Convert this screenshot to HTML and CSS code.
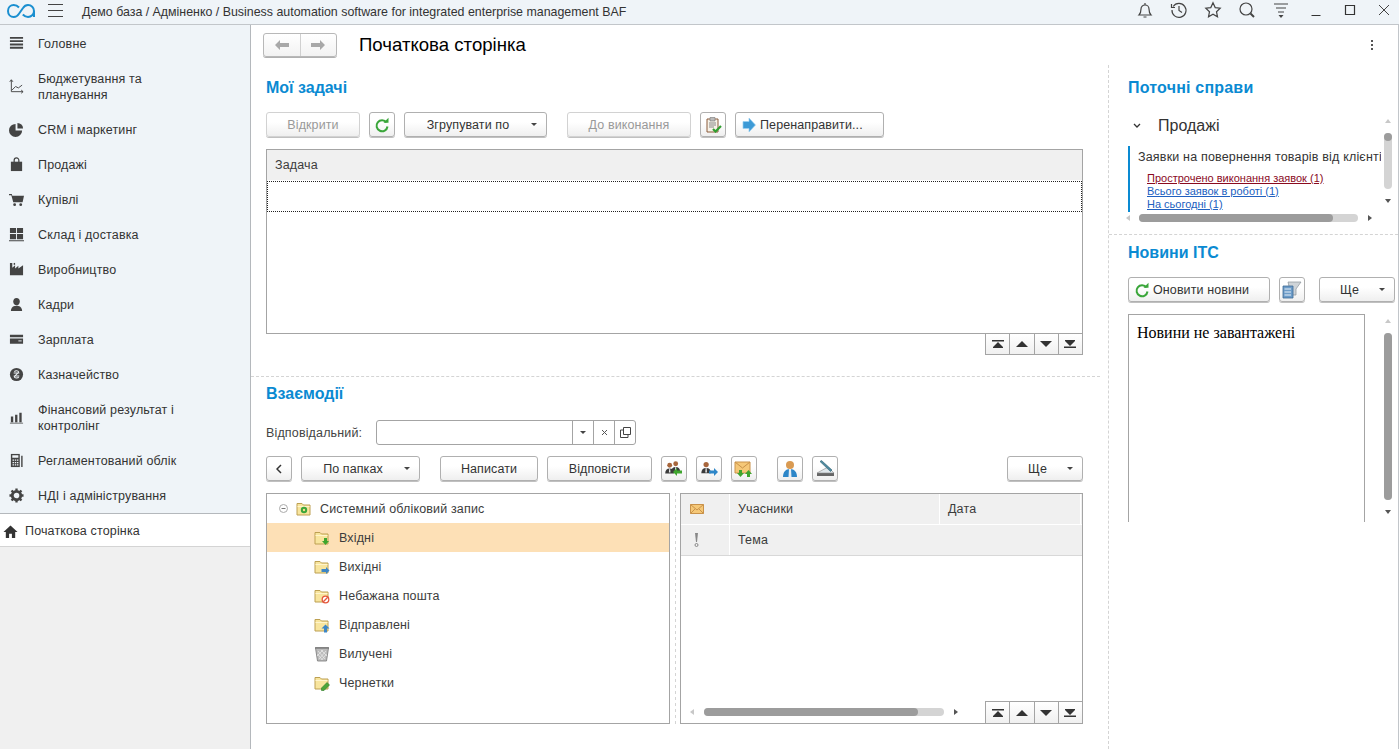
FILE: index.html
```html
<!DOCTYPE html>
<html lang="uk">
<head>
  <meta charset="UTF-8" />
  <meta name="viewport" content="width=device-width, initial-scale=1.0" />
  <title>Початкова сторінка</title>
  <link rel="stylesheet" href="styles.css">
</head>
<body>
  <svg class="sprite" xmlns="http://www.w3.org/2000/svg">
    <symbol id="i-folder" viewBox="0 0 16 16">
      <path d="M1 2.500h5L7.500 4h6.500v10H1z" fill="#f8e59e" stroke="#bda052"/>
      <path d="M1.500 5.500h12" stroke="#fff5cc"/>
    </symbol>
    <symbol id="i-refresh" viewBox="0 0 16 16">
      <path d="M12.500 5.500A5.500 5.500 0 1 0 13.500 9.500" fill="none" stroke="#3aa63a" stroke-width="2"/>
      <path d="M9.500 5.800h5v-5z" fill="#3aa63a"/>
    </symbol>
    <symbol id="i-top" viewBox="0 0 12 8"><path d="M0 0h12v1.500H0zM6 2l5 5H1z" fill="#333"/><path d="M1 7h10v1H1z" fill="#333"/></symbol>
    <symbol id="i-up" viewBox="0 0 12 8"><path d="M6 1l6 6H0z" fill="#333"/></symbol>
    <symbol id="i-down" viewBox="0 0 12 8"><path d="M0 1h12L6 7z" fill="#333"/></symbol>
    <symbol id="i-end" viewBox="0 0 12 8"><path d="M1 0h10v1H1zM6 6L1 1h10zM0 6.500h12V8H0z" fill="#333"/></symbol>
    <symbol id="i-man" viewBox="0 0 16 16">
      <circle cx="7" cy="4" r="3" fill="#a8663c"/>
      <path d="M1.500 14c0-4 2-6 5.500-6s5.500 2 5.500 6z" fill="#3b3b3b"/>
      <path d="M6.500 8h1l.5 5H6z" fill="#e8e8e8"/>
    </symbol>
  </svg>

  <div class="app">
    <header class="topbar">
      <svg class="logo" viewBox="0 0 28 14"><path d="M12 3.500C10.500 1.800 9 1 6.800 1 3.500 1 1 3.500 1 7s2.500 6 5.800 6c2.200 0 3.700-1 5-3L16 4c1.300-2 2.800-3 5-3 3.300 0 6 2.500 6 6v6M27 7c0 3.500-2.700 6-6 6-2.200 0-3.700-1-5.200-2.500" fill="none" stroke="#1a8fd0" stroke-width="2"/></svg>
      <div class="burger"><span></span><span></span><span></span></div>
      <div class="topbar-title">Демо база / Адміненко / Business automation software for integrated enterprise management BAF</div>
      <div class="topbar-tools">
        <svg class="tool" viewBox="0 0 18 18"><path d="M3 14c1.500-1.500 2-3 2-6a4 4 0 0 1 8 0c0 3 .5 4.500 2 6zM9 2v1.500M7.500 16h3" fill="none" stroke="#444" stroke-width="1.200"/></svg>
        <svg class="tool" viewBox="0 0 18 18"><path d="M3.200 5.500A7 7 0 1 1 2 9M1.500 3v3.500H5M9 5v4.500l3 2" fill="none" stroke="#444" stroke-width="1.200"/></svg>
        <svg class="tool" viewBox="0 0 18 18"><path d="M9 1.800l2.200 4.800 5 .6-3.700 3.500 1 5.100L9 13.300l-4.500 2.500 1-5.100L1.800 7.200l5-.6z" fill="none" stroke="#444" stroke-width="1.200"/></svg>
        <svg class="tool" viewBox="0 0 18 18"><circle cx="8" cy="8" r="6" fill="none" stroke="#444" stroke-width="1.200"/><path d="M12.500 12.500L16 16" stroke="#444" stroke-width="2"/></svg>
        <svg class="tool" viewBox="0 0 18 18"><path d="M2 3h14M4 7h10M6 11h6" stroke="#444" stroke-width="1.100"/><path d="M6.500 14h5L9 17z" fill="#444"/></svg>
        <svg class="win" viewBox="0 0 14 14"><path d="M2.500 12.500h9" stroke="#333" stroke-width="1"/></svg>
        <svg class="win" viewBox="0 0 14 14"><path d="M2.500 2.500h9v9h-9z" fill="none" stroke="#333" stroke-width="1.200"/></svg>
        <svg class="win win-last" viewBox="0 0 14 14"><path d="M2 2l10 10M12 2L2 12" stroke="#444" stroke-width="1"/></svg>
      </div>
    </header>

    <div class="workspace">
      <nav class="sidebar">
        <a class="nav-item"><svg class="nav-icon" viewBox="0 0 16 16"><path d="M1 1h14v2H1zM1 4.500h14v2H1zM1 8h14v2H1zM1 11.500h14v2H1z" fill="#444"/></svg><span>Головне</span></a>
        <a class="nav-item"><svg class="nav-icon" viewBox="0 0 16 16"><path d="M2.500 1v12.500H15M.8 3l1.700-2.200L4.200 3M13 11.800l2 1.700-2 1.700M3 12l4-4 3 1.500 4-3" fill="none" stroke="#444" stroke-width="1"/></svg><span>Бюджетування та планування</span></a>
        <a class="nav-item"><svg class="nav-icon" viewBox="0 0 16 16"><path d="M7 2a7 7 0 1 0 7 7H7z" fill="#444"/><path d="M9 1a6 6 0 0 1 6 6H9z" fill="#444"/></svg><span>CRM і маркетинг</span></a>
        <a class="nav-item"><svg class="nav-icon" viewBox="0 0 16 16"><path d="M2 5h12v10H2z" fill="#444"/><path d="M5.500 7V3.500a2.500 2.500 0 0 1 5 0V7" fill="none" stroke="#444" stroke-width="1.300"/></svg><span>Продажі</span></a>
        <a class="nav-item"><svg class="nav-icon" viewBox="0 0 16 16"><path d="M0 2h3l.5 2H16l-1.500 7H4.500L2.500 3.500H0z" fill="#444"/><circle cx="6" cy="13.500" r="1.500" fill="#444"/><circle cx="12.500" cy="13.500" r="1.500" fill="#444"/></svg><span>Купівлі</span></a>
        <a class="nav-item"><svg class="nav-icon" viewBox="0 0 16 16"><path d="M1 1h6.500v5.500H1zM8.500 1H15v5.500H8.500zM1 7.500h6.500V13H1zM8.500 7.500H15V13H8.500zM0 14h16v1.300H0z" fill="#444"/></svg><span>Склад і доставка</span></a>
        <a class="nav-item"><svg class="nav-icon" viewBox="0 0 16 16"><path d="M1 1h2.500v5l3-2.500V7l3.500-3v3l5-3.500V14H1z" fill="#444"/><path d="M5 1h1.500v2H5z" fill="#444"/></svg><span>Виробництво</span></a>
        <a class="nav-item"><svg class="nav-icon" viewBox="0 0 16 16"><path d="M8 1c2.200 0 3.500 1.500 3.500 3.800S10 9 8 9 4.500 7 4.500 4.800 5.800 1 8 1z" fill="#444"/><path d="M2 15c0-3 1.500-5 4-5.500h4c2.500.5 4 2.500 4 5.500z" fill="#444"/></svg><span>Кадри</span></a>
        <a class="nav-item"><svg class="nav-icon" viewBox="0 0 16 16"><path d="M1 3h14v2.500H1zM1 7h14v5.500H1z" fill="#444"/><path d="M10 9h3.500v1H10z" fill="#eff4f8"/></svg><span>Зарплата</span></a>
        <a class="nav-item"><svg class="nav-icon" viewBox="0 0 16 16"><circle cx="8" cy="8" r="7" fill="#444"/><path d="M5 6.500h6M5 9.500h6M5.800 5c.6-1.300 4-1.500 4.400.3.300 1.600-4.700 3.600-4.500 5.300.3 1.600 4 1.400 4.700 0" fill="none" stroke="#eff4f8" stroke-width="1.100"/></svg><span>Казначейство</span></a>
        <a class="nav-item"><svg class="nav-icon" viewBox="0 0 16 16"><path d="M2 7h2.500v6H2zM6.500 5H9v8H6.500zM11 3h2.500v10H11zM1 13.500h14v1H1z" fill="#444"/></svg><span>Фінансовий результат і контролінг</span></a>
        <a class="nav-item"><svg class="nav-icon" viewBox="0 0 16 16"><path d="M2 1h9.500v14H2z" fill="#444"/><path d="M13 3h1.500v12H13z" fill="#444"/><path d="M3.500 2.500h6.500V5H3.500zM3.800 7h1.500v1.300H3.800zM6.200 7h1.500v1.300H6.200zM8.500 7H10v1.300H8.500zM3.800 9.500h1.500v1.300H3.800zM6.200 9.500h1.500v1.300H6.200zM8.500 9.500H10v1.300H8.500zM3.800 12h1.500v1.300H3.800zM6.200 12h1.500v1.300H6.200zM8.500 12H10v1.300H8.500z" fill="#eff4f8"/></svg><span>Регламентований облік</span></a>
        <a class="nav-item"><svg class="nav-icon" viewBox="0 0 16 16"><circle cx="8" cy="8" r="4.500" fill="none" stroke="#444" stroke-width="3"/><path d="M8 .5v15M.5 8h15M2.700 2.700l10.600 10.600M13.300 2.700L2.700 13.300" stroke="#444" stroke-width="2.500" stroke-dasharray="2.500 10 2.500"/></svg><span>НДІ і адміністрування</span></a>
        <a class="nav-item nav-home"><svg class="nav-icon" viewBox="0 0 16 16"><path d="M8 1.500l7.500 7H13V15H9.500v-4.500h-3V15H3V8.500H.5z" fill="#333"/></svg><span>Початкова сторінка</span></a>
        <div class="nav-rest"></div>
      </nav>

      <main class="page">
        <div class="page-head">
          <div class="nav-arrows">
            <button class="arrow-btn"><svg width="14" height="10" viewBox="0 0 14 10"><path d="M0 5l5-5v3h9v4H5v3z" fill="#a8a8a8"/></svg></button>
            <button class="arrow-btn"><svg width="14" height="10" viewBox="0 0 14 10"><path d="M14 5L9 0v3H0v4h9v3z" fill="#a8a8a8"/></svg></button>
          </div>
          <h1 class="page-title">Початкова сторінка</h1>
          <div class="kebab"><i></i><i></i><i></i></div>
        </div>

        <div class="columns">
          <div class="col-main">
            <section class="tasks">
              <h2 class="heading">Мої задачі</h2>
              <div class="toolbar">
                <button class="btn disabled w-open">Відкрити</button>
                <button class="btn square"><svg width="16" height="16"><use href="#i-refresh"/></svg></button>
                <button class="btn w-group"><span class="btn-label">Згрупувати по</span><i class="caret"></i></button>
                <button class="btn disabled w-todo gap-left">До виконання</button>
                <button class="btn square">
                  <svg width="18" height="18" viewBox="0 0 18 18"><path d="M3 3h11v13H3z" fill="#f6f2e8" stroke="#8a5a3a"/><path d="M6 1.500h5V5H6z" fill="#bbb" stroke="#777" stroke-width=".6"/><path d="M5 7h7M5 9h7M5 11h5" stroke="#888"/><path d="M9 13l2.500 2.500L17 10" fill="none" stroke="#2f9e2f" stroke-width="2.200"/></svg>
                </button>
                <button class="btn w-forward">
                  <svg width="14" height="16" viewBox="0 0 14 16"><path d="M1 4.500h6V1l6.500 7L7 15v-3.500H1z" fill="#3d9ad6" stroke="#9ad0f0" stroke-width=".7"/></svg>
                  <span>Перенаправити...</span>
                </button>
              </div>
              <div class="grid-box task-grid">
                <div class="grid-head">Задача</div>
                <div class="grid-row-focus"></div>
              </div>
              <div class="pager pager-below">
                <div class="pager-cell"><svg width="12" height="8"><use href="#i-top"/></svg></div>
                <div class="pager-cell"><svg width="12" height="8"><use href="#i-up"/></svg></div>
                <div class="pager-cell"><svg width="12" height="8"><use href="#i-down"/></svg></div>
                <div class="pager-cell"><svg width="12" height="8"><use href="#i-end"/></svg></div>
              </div>
            </section>

            <section class="mail">
              <h2 class="heading">Взаємодії</h2>
              <div class="field-row">
                <label class="field-label">Відповідальний:</label>
                <div class="field">
                  <div class="field-input"></div>
                  <div class="field-btn"><i class="caret"></i></div>
                  <div class="field-btn">
                    <svg width="7" height="7" viewBox="0 0 7 7"><path d="M1 1l5 5M6 1L1 6" stroke="#555"/></svg>
                  </div>
                  <div class="field-btn">
                    <svg width="11" height="11" viewBox="0 0 11 11"><path d="M3.500.5h7v7h-7zM3 3H.5v7.500H8V8" fill="none" stroke="#444"/></svg>
                  </div>
                </div>
              </div>
              <div class="toolbar mail-bar">
                <button class="btn square"><svg width="6" height="10" viewBox="0 0 6 10"><path d="M5 1L1 5l4 4" fill="none" stroke="#333" stroke-width="1.500"/></svg></button>
                <button class="btn w-folders"><span class="btn-label">По папках</span><i class="caret"></i></button>
                <button class="btn w-write gap-left">Написати</button>
                <button class="btn w-reply">Відповісти</button>
                <button class="btn square">
                  <svg width="20" height="18" viewBox="0 0 20 18"><use href="#i-man" x="0" y="2" width="13" height="13"/><use href="#i-man" x="6" y="0" width="13" height="14"/><path d="M9 12l4-4v2.500h5v3h-5V16z" fill="#3fa52e"/></svg>
                </button>
                <button class="btn square">
                  <svg width="20" height="18" viewBox="0 0 20 18"><use href="#i-man" x="1" y="1" width="14" height="14"/><path d="M19 12l-4-4v2.500h-5v3h5V16z" fill="#2d86c8"/></svg>
                </button>
                <button class="btn square">
                  <svg width="20" height="18" viewBox="0 0 20 18"><path d="M1 2h15v11H1z" fill="#f5c878" stroke="#c9924a"/><path d="M1 2l7.500 6L16 2" fill="none" stroke="#c9924a"/><path d="M5 10h3v3h2l-3.500 4L3 13h2zM13 17v-3h-2l3.500-4 3.500 4h-2v3z" fill="#3fa52e"/></svg>
                </button>
                <button class="btn square gap-left">
                  <svg width="18" height="18" viewBox="0 0 18 18"><circle cx="9" cy="5" r="4" fill="#d99a52"/><path d="M2 17c0-5 2.500-8 7-8s7 3 7 8z" fill="#2d86c8"/><path d="M8 9h2l.5 8h-3z" fill="#e8eef4"/></svg>
                </button>
                <button class="btn square">
                  <svg width="20" height="18" viewBox="0 0 20 18"><path d="M2 13h17v3H2z" fill="#666"/><path d="M2 13L13 7l6 6z" fill="#dfe6ea" stroke="#888" stroke-width=".6"/><path d="M5 1.500l1.500-1L17 10l-1.500 1.500z" fill="#4d8aa0" stroke="#2f5f70" stroke-width=".6"/></svg>
                </button>
                <button class="btn w-more push-right"><span class="btn-label">Ще</span><i class="caret"></i></button>
              </div>
              <div class="panes">
                <div class="grid-box tree">
                  <div class="tree-row">
                    <svg class="tree-toggle" width="9" height="9" viewBox="0 0 9 9"><circle cx="4.500" cy="4.500" r="4" fill="none" stroke="#aaa"/><path d="M2.500 4.500h4" stroke="#777"/></svg>
                    <svg width="16" height="16" viewBox="0 0 16 16"><use href="#i-folder"/><circle cx="8" cy="9" r="3.200" fill="#3aa63a"/><circle cx="8" cy="9" r="1.200" fill="#f6df8e"/></svg>
                    <span class="tree-root-label">Системний обліковий запис</span>
                  </div>
                  <div class="tree-row tree-child selected">
                    <svg width="16" height="16" viewBox="0 0 16 16"><use href="#i-folder"/><path d="M10 8h3v3h2l-3.500 4L8 11h2z" fill="#3fa52e"/></svg>
                    <span>Вхідні</span>
                  </div>
                  <div class="tree-row tree-child">
                    <svg width="16" height="16" viewBox="0 0 16 16"><use href="#i-folder"/><path d="M15.500 11.500L12 8v2H7.500v3H12v2z" fill="#3d86c6"/></svg>
                    <span>Вихідні</span>
                  </div>
                  <div class="tree-row tree-child">
                    <svg width="16" height="16" viewBox="0 0 16 16"><use href="#i-folder"/><circle cx="11.500" cy="11.500" r="3.300" fill="#fff" stroke="#e4573d" stroke-width="1.300"/><path d="M9.300 13.700l4.400-4.400" stroke="#e4573d" stroke-width="1.300"/></svg>
                    <span>Небажана пошта</span>
                  </div>
                  <div class="tree-row tree-child">
                    <svg width="16" height="16" viewBox="0 0 16 16"><use href="#i-folder"/><path d="M11.500 7.500L15.500 11.500h-2.500V15.500h-3V11.500H7.500z" fill="#3d86c6"/></svg>
                    <span>Відправлені</span>
                  </div>
                  <div class="tree-row tree-child">
                    <svg width="16" height="16" viewBox="0 0 16 16"><path d="M1.500 2h13l-2 13h-9z" fill="#bbb" stroke="#777" stroke-width=".8"/><path d="M4 5l7 8M7 4l6 6M3.500 8l5 6M12 5l-7 8M9 4l-6 6M12.500 8l-5 6" stroke="#eee" stroke-width=".7"/><path d="M1 1.800h14" stroke="#666"/></svg>
                    <span>Вилучені</span>
                  </div>
                  <div class="tree-row tree-child">
                    <svg width="16" height="16" viewBox="0 0 16 16"><use href="#i-folder"/><path d="M7.500 15.500v-2.500L13 7.500l2.500 2.500L10 15.500z" fill="#4ca53a" stroke="#2d7a24" stroke-width=".6"/></svg>
                    <span>Чернетки</span>
                  </div>
                </div>
                <div class="pane-split"></div>
                <div class="grid-box mail-grid">
                  <div class="mail-head">
                    <div class="mail-head-row">
                      <div class="hcell hcell-icon"><svg width="14" height="10" viewBox="0 0 14 10"><path d="M.5.500h13v9H.5z" fill="#f5c878" stroke="#c9924a"/><path d="M.5.500L7 6l6.500-5.500M.5 9.500L5 5M13.500 9.500L9 5" fill="none" stroke="#c9924a"/></svg></div>
                      <div class="hcell hcell-people">Учасники</div>
                      <div class="hcell hcell-date">Дата</div>
                      <div class="hcell hcell-tail"></div>
                    </div>
                    <div class="mail-head-row">
                      <div class="hcell hcell-icon"><svg width="5" height="14" viewBox="0 0 5 14"><path d="M1 0h3L3 9H2z" fill="#888"/><circle cx="2.500" cy="12" r="1.500" fill="none" stroke="#888"/></svg></div>
                      <div class="hcell hcell-subject">Тема</div>
                    </div>
                  </div>
                  <div class="mail-body"></div>
                  <div class="mail-foot">
                    <div class="hscroll mail-scroll">
                      <i class="tri-left"></i>
                      <div class="hscroll-track"><div class="hscroll-thumb"></div></div>
                      <i class="tri-right"></i>
                    </div>
                    <div class="pager">
                      <div class="pager-cell"><svg width="12" height="8"><use href="#i-top"/></svg></div>
                      <div class="pager-cell"><svg width="12" height="8"><use href="#i-up"/></svg></div>
                      <div class="pager-cell"><svg width="12" height="8"><use href="#i-down"/></svg></div>
                      <div class="pager-cell"><svg width="12" height="8"><use href="#i-end"/></svg></div>
                    </div>
                  </div>
                </div>
              </div>
            </section>
          </div>

          <aside class="col-side">
            <section class="todo">
              <h2 class="heading">Поточні справи</h2>
              <div class="todo-view">
                <div class="todo-content">
                  <div class="todo-group">
                    <svg width="8" height="5" viewBox="0 0 8 5"><path d="M1 1l3 3 3-3" fill="none" stroke="#333" stroke-width="1.300"/></svg>
                    <span>Продажі</span>
                  </div>
                  <div class="todo-block">
                    <div class="todo-title">Заявки на повернення товарів від клієнтів</div>
                    <a class="todo-link overdue">Прострочено виконання заявок (1)</a>
                    <a class="todo-link">Всього заявок в роботі (1)</a>
                    <a class="todo-link">На сьогодні (1)</a>
                  </div>
                </div>
                <div class="vscroll todo-vscroll">
                  <i class="tri-up"></i>
                  <div class="vscroll-track"><div class="vscroll-thumb"></div></div>
                  <i class="tri-down"></i>
                </div>
              </div>
              <div class="hscroll todo-hscroll">
                <i class="tri-left"></i>
                <div class="hscroll-track"><div class="hscroll-thumb"></div></div>
                <i class="tri-right"></i>
              </div>
            </section>

            <section class="news">
              <h2 class="heading">Новини ІТС</h2>
              <div class="toolbar news-bar">
                <button class="btn w-refresh"><svg width="16" height="16"><use href="#i-refresh"/></svg><span>Оновити новини</span></button>
                <button class="btn square">
                  <svg width="20" height="18" viewBox="0 0 20 18"><path d="M6 1h13l-5 7v6H9z" fill="#cfd4d8" stroke="#8a9299" stroke-width=".7"/><path d="M1 5h10v12H1z" fill="#6d9cc8" stroke="#3c6a96" stroke-width=".8"/><path d="M2.500 8H9M2.500 11H9M2.500 14H9" stroke="#e8f0f8"/></svg>
                </button>
                <button class="btn w-more news-more"><span class="btn-label">Ще</span><i class="caret"></i></button>
              </div>
              <div class="news-area">
                <div class="news-frame">Новини не завантажені</div>
                <div class="vscroll news-vscroll">
                  <i class="tri-up"></i>
                  <div class="vscroll-track"><div class="vscroll-thumb"></div></div>
                  <i class="tri-down"></i>
                </div>
              </div>
            </section>
          </aside>
        </div>
      </main>
    </div>
  </div>
</body>
</html>
```

FILE: styles.css
```css
* {
  box-sizing: border-box;
}

body {
  margin: 0;
  height: 100vh;
  overflow: hidden;
  font-family: "Liberation Sans", Arial, sans-serif;
  font-size: 12.5px;
  letter-spacing: 0.15px;
  color: #3c3c3c;
  background: #fff;
}

.sprite {
  display: none;
}

.app {
  display: flex;
  flex-direction: column;
  height: 749px;
}

/* top bar */
.topbar {
  display: flex;
  align-items: center;
  height: 25px;
  flex: none;
  background: #eff4f8;
  border-bottom: 1px solid #c2c6ca;
}

.logo {
  width: 28px;
  height: 14px;
  margin: -3px 0 0 7px;
}

.burger {
  display: flex;
  flex-direction: column;
  gap: 5px;
  width: 15px;
  margin: -3px 0 0 13px;
}

.burger span {
  height: 1px;
  background: #444;
}

.topbar-title {
  margin: -1px 0 0 19px;
  font-size: 12.4px;
  letter-spacing: 0;
  color: #333;
}

.topbar-tools {
  display: flex;
  align-items: center;
  margin-left: auto;
  margin-top: -4px;
  padding-right: 8px;
}

.tool {
  width: 18px;
  height: 18px;
  margin-right: 16px;
}

.win {
  width: 14px;
  height: 14px;
  margin-left: 4px;
  margin-right: 16px;
}

.tool + .win {
  margin-left: 3px;
}

.win-last {
  margin-right: 0;
}

/* sidebar */
.workspace {
  display: flex;
  flex: 1;
  min-height: 0;
}

.sidebar {
  display: flex;
  flex-direction: column;
  width: 251px;
  flex: none;
  padding-top: 1px;
  background: #eff4f8;
  border-right: 1px solid #b4b8bc;
}

.nav-item {
  display: flex;
  align-items: center;
  flex: none;
  padding: 9.5px 20px 9.5px 9px;
  line-height: 16px;
  color: #333;
}

.nav-item span {
  max-width: 150px;
}

.nav-icon {
  width: 15px;
  height: 15px;
  flex: none;
  margin-right: 14px;
}

.nav-home {
  padding-left: 3px;
  background: #fff;
  border-top: 1px solid #b4b8bc;
  border-bottom: 1px solid #d4d4d4;
  padding-top: 9px;
  padding-bottom: 7px;
}

.nav-home .nav-icon {
  margin-right: 7px;
}

.nav-rest {
  flex: 1;
  background: #f0f0f0;
}

/* page */
.page {
  flex: 1;
  min-width: 0;
  display: flex;
  flex-direction: column;
  border-right: 1px solid #c2c6ca;
}

.page-head {
  display: flex;
  align-items: center;
  height: 40px;
  flex: none;
  padding: 0 25px 0 12px;
}

.nav-arrows {
  display: flex;
  width: 74px;
  height: 24px;
  border: 1px solid #b8b8b8;
  border-radius: 3px;
  background: linear-gradient(#fff, #f2f2f2);
  box-shadow: 0 1px 0 #b0b0b0;
}

.arrow-btn {
  flex: 1;
  padding: 0;
  border: 0;
  background: none;
  display: flex;
  align-items: center;
  justify-content: center;
}

.arrow-btn + .arrow-btn {
  border-left: 1px solid #d0d0d0;
}

.page-title {
  margin: 0 0 0 22px;
  font-size: 18.6px;
  font-weight: normal;
  letter-spacing: 0;
  color: #000;
}

.kebab {
  display: flex;
  flex-direction: column;
  gap: 2px;
  margin-left: auto;
}

.kebab i {
  width: 2px;
  height: 2px;
  background: #555;
}

.columns {
  display: flex;
  flex: 1;
  min-height: 0;
}

.col-main {
  width: 858px;
  flex: none;
  padding-right: 8px;
  border-right: 1px dashed #d4d4d4;
}

.col-side {
  flex: 1;
  min-width: 0;
}

.heading {
  margin: 0;
  height: 20px;
  font-size: 16px;
  line-height: 22px;
  font-weight: bold;
  letter-spacing: 0;
  color: #0a8ad2;
}

/* buttons */
.toolbar {
  display: flex;
  gap: 9px;
  height: 25px;
}

.btn {
  display: flex;
  align-items: center;
  justify-content: center;
  height: 25px;
  padding: 0;
  flex: none;
  border: 1px solid #b0b0b0;
  border-radius: 3px;
  background: linear-gradient(#fff 40%, #efefef);
  box-shadow: 0 1px 0 #c0c0c0;
  font: inherit;
  letter-spacing: 0.1px;
  color: #333;
}

.btn.disabled {
  color: #999;
  border-color: #d2d2d2;
}

.square {
  width: 26px;
}

.btn-label {
  flex: 1;
  text-align: center;
}

.caret {
  display: block;
  width: 0;
  height: 0;
  border-left: 3.5px solid transparent;
  border-right: 3.5px solid transparent;
  border-top: 3.5px solid #444;
}

.btn .caret {
  margin-right: 9px;
}

.w-open {
  width: 94px;
}

.w-group {
  width: 143px;
}

.w-todo {
  width: 124px;
}

.w-forward {
  width: 149px;
  justify-content: flex-start;
  padding-left: 6px;
  gap: 4px;
}

.w-folders {
  width: 119px;
}

.w-write {
  width: 98px;
}

.w-reply {
  width: 105px;
}

.w-more {
  width: 76px;
}

.w-refresh {
  width: 142px;
  justify-content: flex-start;
  padding-left: 5px;
  gap: 3px;
}

.gap-left {
  margin-left: 11px;
}

.push-right {
  margin-left: auto;
}

/* grids */
.grid-box {
  border: 1px solid #a4a4a4;
  background: #fff;
}

.tasks {
  height: 312px;
  padding: 12px 17px 0 15px;
  border-bottom: 1px dashed #d4d4d4;
}

.tasks .toolbar {
  margin-top: 15px;
}

.task-grid {
  height: 185px;
  margin-top: 12px;
}

.grid-head {
  height: 31px;
  padding-left: 8px;
  line-height: 30px;
  background: #f0f0f0;
  border-bottom: 1px solid #fff;
}

.grid-row-focus {
  height: 31px;
  border: 1px dotted #222;
}

.pager {
  display: flex;
  width: 98px;
  height: 22px;
  flex: none;
  margin-left: auto;
  border: 1px solid #a4a4a4;
  border-bottom: 0;
  background: linear-gradient(#fff, #f0f0f0);
}

.pager-below {
  margin-top: -1px;
  border-bottom: 1px solid #a4a4a4;
}

.pager-cell {
  flex: 1;
  display: flex;
  align-items: center;
  justify-content: center;
}

.pager-cell + .pager-cell {
  border-left: 1px solid #a4a4a4;
}

/* mail */
.mail {
  padding: 6px 17px 0 15px;
}

.field-row {
  display: flex;
  align-items: center;
  margin-top: 17px;
}

.field-label {
  width: 110px;
  color: #444;
}

.field {
  display: flex;
  width: 260px;
  height: 25px;
  border: 1px solid #a4a4a4;
  border-radius: 3px;
}

.field-input {
  flex: 1;
}

.field-btn {
  display: flex;
  align-items: center;
  justify-content: center;
  width: 21px;
  border-left: 1px solid #a4a4a4;
}

.mail-bar {
  margin-top: 11px;
}

.panes {
  display: flex;
  height: 231px;
  margin-top: 12px;
}

.tree {
  width: 404px;
  padding-top: 0;
}

.tree-row {
  display: flex;
  align-items: center;
  height: 29px;
  padding-left: 12px;
  gap: 3px;
}

.tree-toggle {
  margin-right: 5px;
}

.tree-root-label {
  margin-left: 5px;
}

.tree-child {
  padding-left: 47px;
  gap: 9px;
}

.tree-row.selected {
  background: #fde0b6;
}

.pane-split {
  width: 10px;
  flex: none;
  background: linear-gradient(#d4d4d4 50%, transparent 50%) 5px 0 / 1px 6px repeat-y;
}

.mail-grid {
  flex: 1;
  display: flex;
  flex-direction: column;
  min-width: 0;
}

.mail-head {
  flex: none;
  border-bottom: 1px solid #d8d8d8;
}

.mail-head-row {
  display: flex;
  height: 30px;
}

.mail-head-row + .mail-head-row {
  margin-top: 1px;
}

.hcell {
  display: flex;
  align-items: center;
  padding-left: 8px;
  background: #f0f0f0;
  border-right: 1px solid #fff;
}

.hcell-icon {
  width: 49px;
  flex: none;
  padding-left: 9px;
}

.mail-head-row + .mail-head-row .hcell-icon svg {
  margin-left: 4px;
}

.hcell-people {
  width: 210px;
  flex: none;
}

.hcell-date {
  width: 141px;
  flex: none;
}

.hcell-tail,
.hcell-subject {
  flex: 1;
  border-right: 0;
}

.hcell-tail {
  padding-left: 0;
}

.mail-body {
  flex: 1;
}

.mail-foot {
  display: flex;
  align-items: flex-end;
}

.mail-scroll {
  width: 268px;
  margin: 0 0 7px 9px;
}

.mail-scroll .hscroll-track {
  margin: 0 10px;
}

.mail-scroll .hscroll-thumb {
  width: 214px;
}

.mail-foot .pager {
  width: 97px;
  border-right: 0;
}

/* scrollbars */
.hscroll {
  display: flex;
  align-items: center;
}

.hscroll-track {
  flex: 1;
  height: 8px;
  border-radius: 4px;
  background: #d4d4d4;
}

.hscroll-thumb {
  height: 8px;
  border-radius: 4px;
  background: #9c9c9c;
}

.vscroll {
  display: flex;
  flex-direction: column;
  align-items: center;
  width: 8px;
  flex: none;
}

.vscroll-track {
  width: 8px;
  border-radius: 4px;
  background: #d4d4d4;
}

.vscroll-thumb {
  width: 8px;
  border-radius: 4px;
  background: #9c9c9c;
}

.tri-up,
.tri-down,
.tri-left,
.tri-right {
  display: block;
  width: 0;
  height: 0;
  flex: none;
  border-style: solid;
  border-color: transparent;
}

.tri-up {
  border-width: 0 3.5px 4px;
  border-bottom-color: #c8c8c8;
  margin-bottom: 10px;
}

.tri-down {
  border-width: 4px 3.5px 0;
  border-top-color: #555;
  margin-top: 10px;
}

.tri-left {
  border-width: 3.5px 4px 3.5px 0;
  border-right-color: #c8c8c8;
}

.tri-right {
  border-width: 3.5px 0 3.5px 4px;
  border-left-color: #555;
}

/* right column */
.todo {
  height: 170px;
  padding: 12px 0 0 19px;
  border-bottom: 1px dashed #d4d4d4;
}

.todo .heading {
  letter-spacing: 0.2px;
}

.todo-view {
  display: flex;
  height: 106px;
  margin-top: 9px;
}

.todo-content {
  width: 253px;
  flex: none;
  overflow: hidden;
}

.todo-group {
  display: flex;
  align-items: center;
  height: 40px;
  padding: 0 0 1px 5px;
  gap: 17px;
  font-size: 16px;
  letter-spacing: 0;
  color: #333;
}

.todo-block {
  width: 253px;
  height: 66px;
  padding: 1px 0 0 8px;
  border-left: 2px solid #0a8ad2;
  white-space: nowrap;
  overflow: hidden;
}

.todo-title {
  height: 21px;
  line-height: 21px;
  margin-bottom: 4px;
  letter-spacing: 0.18px;
  color: #333;
}

.todo-link {
  display: block;
  margin-left: 9px;
  font-size: 11px;
  line-height: 13px;
  letter-spacing: 0;
  color: #2060c0;
  text-decoration: underline;
}

.overdue {
  color: #8a0a1e;
}

.todo-vscroll {
  margin: 13px 0 0 3px;
}

.todo-vscroll .vscroll-track {
  height: 56px;
}

.todo-vscroll .vscroll-thumb {
  height: 8px;
}

.todo-hscroll {
  width: 246px;
  margin: 2px 0 0 -2px;
}

.todo-hscroll .hscroll-track {
  margin: 0 10px 0 9px;
}

.todo-hscroll .hscroll-thumb {
  width: 194px;
}

.news {
  padding: 7px 0 0 19px;
}

.news-bar {
  margin-top: 15px;
}

.w-refresh + .square {
  margin-right: 5px;
}

.news-area {
  display: flex;
  height: 208px;
  margin-top: 12px;
}

.news-frame {
  width: 237px;
  flex: none;
  padding: 9px 8px;
  border: 1px solid #a4a4a4;
  border-bottom: 0;
  font-family: "Liberation Serif", "Times New Roman", serif;
  font-size: 16px;
  line-height: 18px;
  letter-spacing: 0;
  color: #000;
}

.news-vscroll {
  margin-left: 19px;
  padding: 5px 0 8px;
}

.news-vscroll .vscroll-thumb {
  height: 167px;
}
```
